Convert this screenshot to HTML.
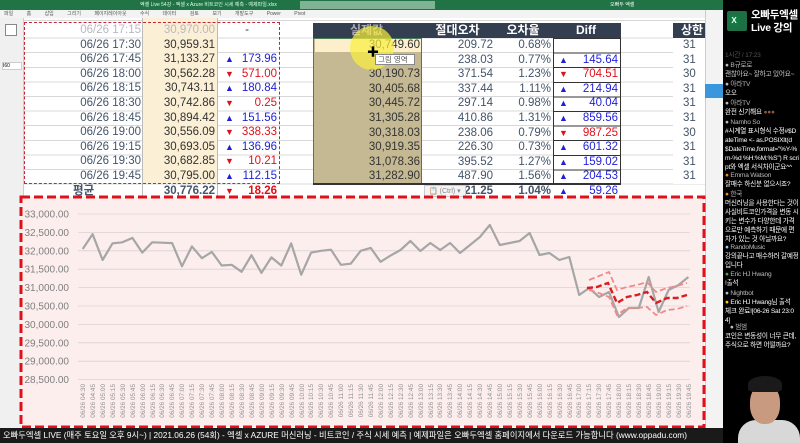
<!DOCTYPE html>
<html><head><meta charset="utf-8"><style>
*{margin:0;padding:0;box-sizing:border-box}
body{width:800px;height:443px;overflow:hidden;background:#fff;position:relative;font-family:"Liberation Sans","Noto Sans CJK KR",sans-serif}
.a{position:absolute}
.c{position:absolute;height:14.6px;line-height:14.6px;font-size:11.5px;text-align:right;padding-right:2px;color:#44546a;white-space:nowrap;overflow:hidden}
.up{color:#1f1fd8}.dn{color:#e0101a}
.tri{position:absolute;font-size:9px;line-height:14.6px}
.chat{position:absolute;left:725px;font-size:6.6px;color:#fff;white-space:nowrap;line-height:9px;letter-spacing:-0.2px}
.n{color:#bbb}
</style></head><body>
<div class="a" style="left:0;top:0;width:723px;height:10px;background:#217346"></div>
<div class="a" style="left:300px;top:1px;width:135px;height:8px;background:#7fb394"></div>
<div class="a" style="left:140px;top:1px;font-size:5px;color:#dfe;white-space:nowrap">엑셀 Live 54강 - 엑셀 x Azure 비트코인 시세 예측 - 예제파일.xlsx</div>
<div class="a" style="left:610px;top:1px;font-size:5px;color:#fff">오빠두 엑셀</div>
<div class="a" style="left:0;top:10px;width:723px;height:8px;background:#f3f3f3;font-size:5px;color:#555;line-height:8px;white-space:nowrap;padding-left:4px;word-spacing:12px">파일 홈 삽입 그리기 페이지레이아웃 수식 데이터 검토 보기 개발도구 Power&nbsp;Pivot</div>
<div class="a" style="left:0;top:18px;width:24px;height:410px;background:#f0f0f0;border-right:1px solid #ccc"></div>
<div class="a" style="left:5px;top:24px;width:12px;height:12px;border:1px solid #888;background:#fff"></div>
<div class="a" style="left:2px;top:62px;width:20px;height:8px;background:#fff;border:1px solid #ccc;font-size:5px">I60</div>
<div class="a" style="left:24px;top:18px;width:681px;height:178px;background:repeating-linear-gradient(#fff 0 13.6px,#d8d8d8 13.6px 14.6px);background-position:0 6px"></div>
<div class="a" style="left:143px;top:18px;width:74px;height:165px;background:#fbefd5"></div>
<div class="a" style="left:142px;top:18px;width:1px;height:180px;background:#bbb"></div>
<div class="a" style="left:217px;top:18px;width:1px;height:180px;background:#bbb"></div>
<div class="a" style="left:24px;top:22px;width:256px;height:162px;border:1.5px dashed #c0283a"></div>

<div class="c" style="left:25px;top:23px;width:118px;color:#b8b8c4">06/26 17:15</div><div class="c" style="left:143px;top:23px;width:74px;color:#b8b8c4">30,970.00</div><div class="c" style="left:217px;top:23px;width:62px;text-align:center;color:#333">-</div>
<div class="c" style="left:25px;top:37.6px;width:118px">06/26 17:30</div><div class="c" style="left:143px;top:37.6px;width:74px;color:#333">30,959.31</div>
<div class="c" style="left:25px;top:52.2px;width:118px">06/26 17:45</div><div class="c" style="left:143px;top:52.2px;width:74px;color:#333">31,133.27</div><div class="tri up" style="left:225px;top:52.2px">▲</div><div class="c up" style="left:230px;top:52.2px;width:49px">173.96</div>
<div class="c" style="left:25px;top:66.8px;width:118px">06/26 18:00</div><div class="c" style="left:143px;top:66.8px;width:74px;color:#333">30,562.28</div><div class="tri dn" style="left:225px;top:66.8px">▼</div><div class="c dn" style="left:230px;top:66.8px;width:49px">571.00</div>
<div class="c" style="left:25px;top:81.4px;width:118px">06/26 18:15</div><div class="c" style="left:143px;top:81.4px;width:74px;color:#333">30,743.11</div><div class="tri up" style="left:225px;top:81.4px">▲</div><div class="c up" style="left:230px;top:81.4px;width:49px">180.84</div>
<div class="c" style="left:25px;top:96px;width:118px">06/26 18:30</div><div class="c" style="left:143px;top:96px;width:74px;color:#333">30,742.86</div><div class="tri dn" style="left:225px;top:96px">▼</div><div class="c dn" style="left:230px;top:96px;width:49px">0.25</div>
<div class="c" style="left:25px;top:110.6px;width:118px">06/26 18:45</div><div class="c" style="left:143px;top:110.6px;width:74px;color:#333">30,894.42</div><div class="tri up" style="left:225px;top:110.6px">▲</div><div class="c up" style="left:230px;top:110.6px;width:49px">151.56</div>
<div class="c" style="left:25px;top:125.2px;width:118px">06/26 19:00</div><div class="c" style="left:143px;top:125.2px;width:74px;color:#333">30,556.09</div><div class="tri dn" style="left:225px;top:125.2px">▼</div><div class="c dn" style="left:230px;top:125.2px;width:49px">338.33</div>
<div class="c" style="left:25px;top:139.8px;width:118px">06/26 19:15</div><div class="c" style="left:143px;top:139.8px;width:74px;color:#333">30,693.05</div><div class="tri up" style="left:225px;top:139.8px">▲</div><div class="c up" style="left:230px;top:139.8px;width:49px">136.96</div>
<div class="c" style="left:25px;top:154.4px;width:118px">06/26 19:30</div><div class="c" style="left:143px;top:154.4px;width:74px;color:#333">30,682.85</div><div class="tri dn" style="left:225px;top:154.4px">▼</div><div class="c dn" style="left:230px;top:154.4px;width:49px">10.21</div>
<div class="c" style="left:25px;top:169px;width:118px">06/26 19:45</div><div class="c" style="left:143px;top:169px;width:74px;color:#333">30,795.00</div><div class="tri up" style="left:225px;top:169px">▲</div><div class="c up" style="left:230px;top:169px;width:49px">112.15</div>
<div class="c" style="left:25px;top:183.5px;width:118px;text-align:left;padding-left:48px;font-weight:bold">평균</div>
<div class="c" style="left:143px;top:183.5px;width:74px;font-weight:bold">30,776.22</div><div class="tri dn" style="left:225px;top:183.5px">▼</div><div class="c dn" style="left:230px;top:183.5px;width:49px;font-weight:bold">18.26</div>

<div class="a" style="left:313px;top:23px;width:308px;height:15px;background:#333f50"></div>
<div class="a" style="left:673px;top:23px;width:32px;height:15px;background:#333f50"></div>
<div class="c" style="left:313px;top:23px;width:109px;text-align:center;color:#aab;font-weight:bold;font-size:12px">실제값</div>
<div class="c" style="left:422px;top:23px;width:73px;text-align:center;color:#fff;font-weight:bold;font-size:12px">절대오차</div>
<div class="c" style="left:495px;top:23px;width:58px;text-align:center;color:#fff;font-weight:bold;font-size:12px">오차율</div>
<div class="c" style="left:553px;top:23px;width:68px;text-align:center;color:#fff;font-weight:bold;font-size:12px">Diff</div>
<div class="c" style="left:673px;top:23px;width:32px;text-align:left;padding-left:8px;color:#fff;font-weight:bold;font-size:12px">상한</div>
<div class="a" style="left:313px;top:38px;width:109px;height:146px;background:#c5b994;border:1.5px solid #4a7c55"></div>
<div class="a" style="left:314.5px;top:39px;width:106px;height:13px;background:#fdefcc"></div>
<div class="a" style="left:553px;top:38px;width:68px;height:146px;border:1px solid #333;background:repeating-linear-gradient(#fff 0 13.6px,#333 13.6px 14.6px)"></div>
<div class="a" style="left:313px;top:183px;width:308px;height:1.5px;background:#333"></div>
<div class="c" style="left:313px;top:38px;width:109px;color:#333">30,749.60</div><div class="c" style="left:422px;top:38px;width:73px">209.72</div><div class="c" style="left:495px;top:38px;width:58px">0.68%</div>
<div class="c" style="left:422px;top:52.6px;width:73px">238.03</div><div class="c" style="left:495px;top:52.6px;width:58px">0.77%</div><div class="tri up" style="left:559px;top:52.6px">▲</div><div class="c up" style="left:570px;top:52.6px;width:50px">145.64</div>
<div class="c" style="left:313px;top:67.2px;width:109px;color:#333">30,190.73</div><div class="c" style="left:422px;top:67.2px;width:73px">371.54</div><div class="c" style="left:495px;top:67.2px;width:58px">1.23%</div><div class="tri dn" style="left:559px;top:67.2px">▼</div><div class="c dn" style="left:570px;top:67.2px;width:50px">704.51</div>
<div class="c" style="left:313px;top:81.8px;width:109px;color:#333">30,405.68</div><div class="c" style="left:422px;top:81.8px;width:73px">337.44</div><div class="c" style="left:495px;top:81.8px;width:58px">1.11%</div><div class="tri up" style="left:559px;top:81.8px">▲</div><div class="c up" style="left:570px;top:81.8px;width:50px">214.94</div>
<div class="c" style="left:313px;top:96.4px;width:109px;color:#333">30,445.72</div><div class="c" style="left:422px;top:96.4px;width:73px">297.14</div><div class="c" style="left:495px;top:96.4px;width:58px">0.98%</div><div class="tri up" style="left:559px;top:96.4px">▲</div><div class="c up" style="left:570px;top:96.4px;width:50px">40.04</div>
<div class="c" style="left:313px;top:111px;width:109px;color:#333">31,305.28</div><div class="c" style="left:422px;top:111px;width:73px">410.86</div><div class="c" style="left:495px;top:111px;width:58px">1.31%</div><div class="tri up" style="left:559px;top:111px">▲</div><div class="c up" style="left:570px;top:111px;width:50px">859.56</div>
<div class="c" style="left:313px;top:125.6px;width:109px;color:#333">30,318.03</div><div class="c" style="left:422px;top:125.6px;width:73px">238.06</div><div class="c" style="left:495px;top:125.6px;width:58px">0.79%</div><div class="tri dn" style="left:559px;top:125.6px">▼</div><div class="c dn" style="left:570px;top:125.6px;width:50px">987.25</div>
<div class="c" style="left:313px;top:140.2px;width:109px;color:#333">30,919.35</div><div class="c" style="left:422px;top:140.2px;width:73px">226.30</div><div class="c" style="left:495px;top:140.2px;width:58px">0.73%</div><div class="tri up" style="left:559px;top:140.2px">▲</div><div class="c up" style="left:570px;top:140.2px;width:50px">601.32</div>
<div class="c" style="left:313px;top:154.8px;width:109px;color:#333">31,078.36</div><div class="c" style="left:422px;top:154.8px;width:73px">395.52</div><div class="c" style="left:495px;top:154.8px;width:58px">1.27%</div><div class="tri up" style="left:559px;top:154.8px">▲</div><div class="c up" style="left:570px;top:154.8px;width:50px">159.02</div>
<div class="c" style="left:313px;top:169.4px;width:109px;color:#333">31,282.90</div><div class="c" style="left:422px;top:169.4px;width:73px">487.90</div><div class="c" style="left:495px;top:169.4px;width:58px">1.56%</div><div class="tri up" style="left:559px;top:169.4px">▲</div><div class="c up" style="left:570px;top:169.4px;width:50px">204.53</div>
<div class="c" style="left:422px;top:183.5px;width:73px;font-weight:bold">21.25</div><div class="c" style="left:495px;top:183.5px;width:58px;font-weight:bold">1.04%</div><div class="tri up" style="left:559px;top:183.5px">▲</div><div class="c up" style="left:570px;top:183.5px;width:50px">59.26</div>
<div class="a" style="left:424px;top:185px;width:42px;height:12px;background:#f4f4f4;border:1px solid #ccc;font-size:7px;color:#888;line-height:11px;padding-left:4px">📋 (Ctrl) ▾</div>
<div class="a" style="left:673px;top:38px;width:32px;height:146px;font-size:11.5px;color:#44546a;line-height:14.6px;padding-left:10px;background:#fff">31<br>31<br>30<br>31<br>31<br>31<br>30<br>31<br>31<br>31</div>
<div class="a" style="left:350px;top:26px;width:44px;height:44px;border-radius:50%;background:rgba(250,240,60,.7)"></div>
<div class="a" style="left:367px;top:43px;font-size:12px;font-weight:bold;color:#000">✚</div>
<div class="a" style="left:375px;top:54px;width:40px;height:11px;background:#fff;border:1px solid #888;font-size:7.5px;color:#555;line-height:10px;padding-left:2px">그림 영역</div>
<div class="a" style="left:705px;top:10px;width:18px;height:418px;background:#f3f3f3;border-left:1px solid #ccc"></div>
<div class="a" style="left:705px;top:84px;width:18px;height:14px;background:#3a96dd"></div>

<svg class="a" style="left:0;top:0" width="800" height="443" viewBox="0 0 800 443">
<rect x="21" y="197" width="683" height="230" fill="#fdeeee" stroke="#e0101a" stroke-width="3" stroke-dasharray="9,4"/>
<g stroke="#d9d2d2" stroke-width="0.8">
<line x1="78" y1="214" x2="690" y2="214"/><line x1="78" y1="232.4" x2="690" y2="232.4"/><line x1="78" y1="250.8" x2="690" y2="250.8"/><line x1="78" y1="269.2" x2="690" y2="269.2"/><line x1="78" y1="287.6" x2="690" y2="287.6"/><line x1="78" y1="306" x2="690" y2="306"/><line x1="78" y1="324.4" x2="690" y2="324.4"/><line x1="78" y1="342.8" x2="690" y2="342.8"/><line x1="78" y1="361.2" x2="690" y2="361.2"/><line x1="78" y1="379.6" x2="690" y2="379.6"/>
</g>
<g font-family="Liberation Sans,sans-serif" font-size="10" fill="#7f7f7f" text-anchor="end">
<text x="69" y="217.5">33,000.00</text><text x="69" y="235.9">32,500.00</text><text x="69" y="254.3">32,000.00</text><text x="69" y="272.7">31,500.00</text><text x="69" y="291.1">31,000.00</text><text x="69" y="309.5">30,500.00</text><text x="69" y="327.9">30,000.00</text><text x="69" y="346.3">29,500.00</text><text x="69" y="364.7">29,000.00</text><text x="69" y="383.1">28,500.00</text>
</g>
<polyline fill="none" stroke="#a6a6a6" stroke-width="2.2" stroke-linejoin="round" points="82.7,249 92.6,234.2 102.6,260 112.5,243.4 122.4,242.3 132.4,237.9 142.3,252.6 152.2,242.3 162.1,242.7 172.1,243.1 182,266.3 191.9,246.4 201.9,258.2 211.8,251.9 221.7,265.5 231.7,264.8 241.6,271.8 251.5,255.2 261.4,272.9 271.4,257.4 281.3,265.5 291.2,243.4 301.2,274.7 311.1,252.6 321,250.8 331,249.7 340.9,264.8 350.8,263.7 360.7,250.8 370.7,247.9 380.6,261.8 390.5,255.6 400.5,250 410.4,241 420.3,251 430.3,243 440.2,250 450.1,243 460,253 470,245 479.9,237 489.8,225 499.8,245 509.7,243 519.6,241 529.6,233 539.5,255 549.4,253 559.3,260 569.3,257 579.2,295 589.1,288 599.1,297 609,292 618.9,317 628.9,308 638.8,308 648.7,277 658.6,312 668.6,290 678.5,285 688.4,277"/>
<polyline fill="none" stroke="#f08a8a" stroke-width="1.8" stroke-dasharray="6,3" points="589,280 599,276 609,272 617,290 627,287 637,285 647,282 656,292 667,288 677,286 687,283"/>
<polyline fill="none" stroke="#f08a8a" stroke-width="1.8" stroke-dasharray="6,3" points="589,290 599,293 609,297 617,315 627,308 637,308 647,307 656,315 667,310 677,309 687,306"/>
<polyline fill="none" stroke="#d42020" stroke-width="2.4" stroke-dasharray="6,3" points="587,288 597,287 608,283 617,303 627,297 637,295 647,292 656,303 667,298 677,298 687,295"/>
<g font-family="Liberation Sans,sans-serif" font-size="6.4" fill="#8c8c8c" text-anchor="end">
<text transform="translate(85,384) rotate(-90)">06/26 04:30</text><text transform="translate(95,384) rotate(-90)">06/26 04:45</text><text transform="translate(105,384) rotate(-90)">06/26 05:00</text><text transform="translate(115,384) rotate(-90)">06/26 05:15</text><text transform="translate(125,384) rotate(-90)">06/26 05:30</text><text transform="translate(135,384) rotate(-90)">06/26 05:45</text><text transform="translate(145,384) rotate(-90)">06/26 06:00</text><text transform="translate(155,384) rotate(-90)">06/26 06:15</text><text transform="translate(164,384) rotate(-90)">06/26 06:30</text><text transform="translate(174,384) rotate(-90)">06/26 06:45</text><text transform="translate(184,384) rotate(-90)">06/26 07:00</text><text transform="translate(194,384) rotate(-90)">06/26 07:15</text><text transform="translate(204,384) rotate(-90)">06/26 07:30</text><text transform="translate(214,384) rotate(-90)">06/26 07:45</text><text transform="translate(224,384) rotate(-90)">06/26 08:00</text><text transform="translate(234,384) rotate(-90)">06/26 08:15</text><text transform="translate(244,384) rotate(-90)">06/26 08:30</text><text transform="translate(254,384) rotate(-90)">06/26 08:45</text><text transform="translate(264,384) rotate(-90)">06/26 09:00</text><text transform="translate(274,384) rotate(-90)">06/26 09:15</text><text transform="translate(284,384) rotate(-90)">06/26 09:30</text><text transform="translate(294,384) rotate(-90)">06/26 09:45</text><text transform="translate(304,384) rotate(-90)">06/26 10:00</text><text transform="translate(313,384) rotate(-90)">06/26 10:15</text><text transform="translate(323,384) rotate(-90)">06/26 10:30</text><text transform="translate(333,384) rotate(-90)">06/26 10:45</text><text transform="translate(343,384) rotate(-90)">06/26 11:00</text><text transform="translate(353,384) rotate(-90)">06/26 11:15</text><text transform="translate(363,384) rotate(-90)">06/26 11:30</text><text transform="translate(373,384) rotate(-90)">06/26 11:45</text><text transform="translate(383,384) rotate(-90)">06/26 12:00</text><text transform="translate(393,384) rotate(-90)">06/26 12:15</text><text transform="translate(403,384) rotate(-90)">06/26 12:30</text><text transform="translate(413,384) rotate(-90)">06/26 12:45</text><text transform="translate(423,384) rotate(-90)">06/26 13:00</text><text transform="translate(433,384) rotate(-90)">06/26 13:15</text><text transform="translate(442,384) rotate(-90)">06/26 13:30</text><text transform="translate(452,384) rotate(-90)">06/26 13:45</text><text transform="translate(462,384) rotate(-90)">06/26 14:00</text><text transform="translate(472,384) rotate(-90)">06/26 14:15</text><text transform="translate(482,384) rotate(-90)">06/26 14:30</text><text transform="translate(492,384) rotate(-90)">06/26 14:45</text><text transform="translate(502,384) rotate(-90)">06/26 15:00</text><text transform="translate(512,384) rotate(-90)">06/26 15:15</text><text transform="translate(522,384) rotate(-90)">06/26 15:30</text><text transform="translate(532,384) rotate(-90)">06/26 15:45</text><text transform="translate(542,384) rotate(-90)">06/26 16:00</text><text transform="translate(552,384) rotate(-90)">06/26 16:15</text><text transform="translate(562,384) rotate(-90)">06/26 16:30</text><text transform="translate(572,384) rotate(-90)">06/26 16:45</text><text transform="translate(581,384) rotate(-90)">06/26 17:00</text><text transform="translate(591,384) rotate(-90)">06/26 17:15</text><text transform="translate(601,384) rotate(-90)">06/26 17:30</text><text transform="translate(611,384) rotate(-90)">06/26 17:45</text><text transform="translate(621,384) rotate(-90)">06/26 18:00</text><text transform="translate(631,384) rotate(-90)">06/26 18:15</text><text transform="translate(641,384) rotate(-90)">06/26 18:30</text><text transform="translate(651,384) rotate(-90)">06/26 18:45</text><text transform="translate(661,384) rotate(-90)">06/26 19:00</text><text transform="translate(671,384) rotate(-90)">06/26 19:15</text><text transform="translate(681,384) rotate(-90)">06/26 19:30</text><text transform="translate(691,384) rotate(-90)">06/26 19:45</text>
</g>
</svg>

<div class="a" style="left:723px;top:0;width:77px;height:443px;background:#000;overflow:hidden"></div>
<div class="a" style="left:727px;top:11px;width:20px;height:20px;background:#1d7044;border-radius:2px"></div>
<div class="a" style="left:729px;top:15px;width:10px;height:11px;background:#107c41;color:#fff;font-size:8px;font-weight:bold;text-align:center;line-height:11px">X</div>
<div class="a" style="left:751px;top:9px;font-size:10.5px;line-height:13px;color:#fff;font-weight:bold;white-space:nowrap;letter-spacing:-0.3px">오빠두엑셀<br>Live 강의</div>
<div class="chat n" style="top:51px;color:#555">1시간 / 17:23</div>
<div class="chat n" style="top:61px">● B규로로</div><div class="chat" style="top:70px;color:#ccc">괜찮아요~ 잘하고 있어요~</div>
<div class="chat n" style="top:80px">● 아라TV</div><div class="chat" style="top:89px">오오</div>
<div class="chat n" style="top:99px">● 아라TV</div><div class="chat" style="top:108px">완전 신기해요 <span style="color:#8b5a3c">●●●</span></div>
<div class="chat n" style="top:118px">● Namho So</div>
<div class="chat" style="top:127px">#시계열 표시형식 수정#$D<br>ateTime &lt;- as.POSIXlt(d<br>$DateTime,format="%Y-%<br>m-%d %H:%M:%S") R scri<br>pt와 엑셀 서식차이군요^^</div>
<div class="chat n" style="top:171px"><span style="color:#f80">●</span> Emma Watson</div><div class="chat" style="top:180px">잘매수 하신분 없으시죠?</div>
<div class="chat n" style="top:190px"><span style="color:#f80">●</span> 한국</div>
<div class="chat" style="top:199px">머신러닝을 사용한다는 것이<br>사실비트코인가격을 변동 시<br>키는 변수가 다양한데 가격<br>으로만 예측하기 때문에 편<br>차가 있는 것 아닐까요?</div>
<div class="chat n" style="top:243px"><span style="color:#9cf">●</span> RandoMusic</div><div class="chat" style="top:252px">강의끝나고 매수하러 갈예정<br>입니다</div>
<div class="chat n" style="top:270px"><span style="color:#4a4">●</span> Eric HJ Hwang</div><div class="chat" style="top:279px">!출석</div>
<div class="chat n" style="top:289px">● Nightbot</div><div class="chat" style="top:298px"><span style="color:#fc0">●</span> Eric HJ Hwang님 출석<br>체크 완료![06-26 Sat 23:0<br>4]</div>
<div class="chat n" style="top:323px">&nbsp;&nbsp;&nbsp;● 범범</div><div class="chat" style="top:332px">코인은 변동성이 너무 큰데,<br>주식으로 하면 어떨까요?</div>
<div class="a" style="left:738px;top:420px;width:62px;height:23px;background:#d8d8d8;border-radius:18px 18px 0 0"></div>
<div class="a" style="left:750px;top:384px;width:30px;height:40px;background:#c89a80;border-radius:45%"></div>
<div class="a" style="left:748px;top:376px;width:34px;height:16px;background:#1a1a1a;border-radius:50% 50% 20% 20%"></div>
<div class="a" style="left:0;top:428px;width:723px;height:15px;background:#1a1a1a;color:#fff;font-size:8.3px;line-height:15px;white-space:nowrap;padding-left:3px;overflow:hidden">오빠두엑셀 LIVE (매주 토요일 오후 9시~) | 2021.06.26 (54회) - 엑셀 x AZURE 머신러닝 - 비트코인 / 주식 시세 예측 | 예제파일은 오빠두엑셀 홈페이지에서 다운로드 가능합니다 (www.oppadu.com)</div>
</body></html>
